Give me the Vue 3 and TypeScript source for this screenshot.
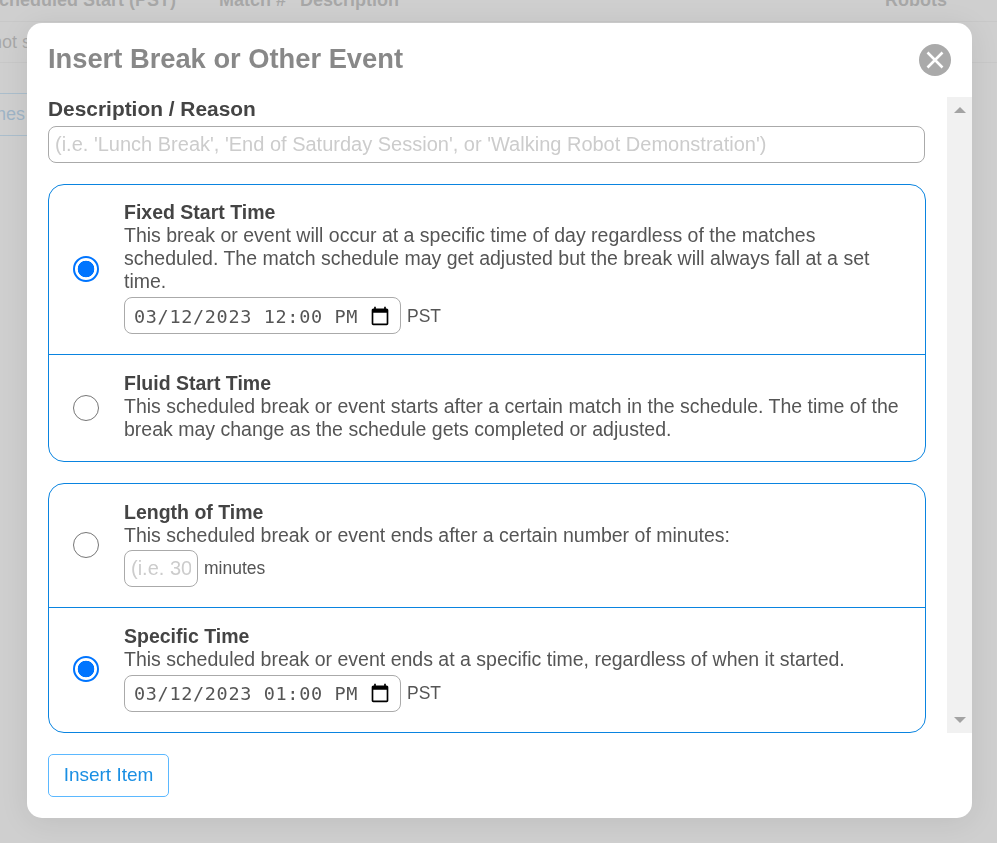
<template>
  <div class="page">
    <div class="table-head">
      <span class="col-start">Scheduled Start (PST)</span>
      <span class="col-match">Match #</span>
      <span class="col-desc">Description</span>
      <span class="col-robots">Robots</span>
    </div>
    <div class="table-row">not scheduled</div>
    <button class="back-btn" type="button">Matches</button>
  </div>

  <div class="overlay"></div>

  <div class="modal">
    <div class="modal-head">
      <h2>Insert Break or Other Event</h2>
      <button class="close" type="button" aria-label="Close">
        <svg width="32" height="32" viewBox="0 0 32 32">
          <circle cx="16" cy="16" r="16" fill="#aaa" />
          <path d="M8.5 8.5 L23.5 23.5 M23.5 8.5 L8.5 23.5" stroke="#fff" stroke-width="2.6" />
        </svg>
      </button>
    </div>

    <div class="scroller">
      <form class="content" @submit.prevent>
        <label class="desc-label" for="desc">Description / Reason</label>
        <input
          id="desc"
          v-model="description"
          class="text-input"
          type="text"
          placeholder="(i.e. 'Lunch Break', 'End of Saturday Session', or 'Walking Robot Demonstration')"
        />

        <div class="group">
          <label class="option fixed">
            <span class="radio-cell">
              <input v-model="startMode" type="radio" name="start" value="fixed" />
            </span>
            <span class="body">
              <strong>Fixed Start Time</strong>
              <span class="text">This break or event will occur at a specific time of day regardless of the matches scheduled. The match schedule may get adjusted but the break will always fall at a set time.</span>
              <span class="when">
                <span class="date-input">
                  <span class="date-text">{{ startTime }}</span>
                  <svg width="20" height="20" viewBox="0 0 24 24">
                    <path :d="calendarIcon" fill="#000" />
                  </svg>
                </span>
                <span class="tz">PST</span>
              </span>
            </span>
          </label>
          <label class="option fluid">
            <span class="radio-cell">
              <input v-model="startMode" type="radio" name="start" value="fluid" />
            </span>
            <span class="body">
              <strong>Fluid Start Time</strong>
              <span class="text">This scheduled break or event starts after a certain match in the schedule. The time of the break may change as the schedule gets completed or adjusted.</span>
            </span>
          </label>
        </div>

        <div class="group">
          <label class="option length">
            <span class="radio-cell">
              <input v-model="endMode" type="radio" name="end" value="length" />
            </span>
            <span class="body">
              <strong>Length of Time</strong>
              <span class="text">This scheduled break or event ends after a certain number of minutes:</span>
              <span class="when">
                <input v-model="minutes" class="minutes-input" type="text" placeholder="(i.e. 30)" />
                <span class="unit">minutes</span>
              </span>
            </span>
          </label>
          <label class="option specific">
            <span class="radio-cell">
              <input v-model="endMode" type="radio" name="end" value="specific" />
            </span>
            <span class="body">
              <strong>Specific Time</strong>
              <span class="text">This scheduled break or event ends at a specific time, regardless of when it started.</span>
              <span class="when">
                <span class="date-input">
                  <span class="date-text">{{ endTime }}</span>
                  <svg width="20" height="20" viewBox="0 0 24 24">
                    <path :d="calendarIcon" fill="#000" />
                  </svg>
                </span>
                <span class="tz">PST</span>
              </span>
            </span>
          </label>
        </div>
      </form>

      <div class="scrollbar" aria-hidden="true">
        <span class="arrow up"></span>
        <span class="arrow down"></span>
      </div>
    </div>

    <button class="insert" type="button">Insert Item</button>
  </div>
</template>

<script setup lang="ts">
import { ref } from "vue";

const calendarIcon =
  "M20 3h-1V1h-2v2H7V1H5v2H4c-1.1 0-2 .9-2 2v16c0 1.1.9 2 2 2h16c1.1 0 2-.9 2-2V5c0-1.1-.9-2-2-2zm0 18H4V8h16v13z";

const description = ref("");
const minutes = ref("");
const startMode = ref("fixed");
const endMode = ref("specific");
const startTime = ref("03/12/2023 12:00 PM");
const endTime = ref("03/12/2023 01:00 PM");
</script>

<style>
html,
body {
  height: 100%;
  overflow: hidden;
  background: #fff;
}
</style>

<style scoped>
.page {
  height: 843px;
  font-family: "Liberation Sans", Arial, sans-serif;
  font-size: 18px;
  color: #3a3a3a;
}

.table-head {
  display: flex;
  box-sizing: border-box;
  height: 31px;
  margin-top: -9px;
  font-weight: 700;
  line-height: 18px;
  border-bottom: 1px solid #ddd;
}

.col-start {
  margin-left: -13px;
  width: 232px;
}

.col-match {
  width: 81px;
}

.col-desc {
  width: 585px;
}

.table-row {
  box-sizing: border-box;
  height: 41px;
  line-height: 40px;
  text-indent: -8px;
  border-bottom: 1px solid #ddd;
  overflow: hidden;
  white-space: nowrap;
}

.back-btn {
  display: block;
  margin: 30px 0 0 -60px;
  width: 110px;
  height: 43px;
  background: #fff;
  border: 1px solid #4aa8f0;
  border-radius: 5px;
  font: 18px "Liberation Sans", Arial, sans-serif;
  color: #0a7ad0;
  text-align: right;
  padding-right: 24px;
}

.overlay {
  position: fixed;
  inset: 0;
  background: rgba(195, 195, 195, 0.8);
  backdrop-filter: blur(0.6px);
}

.modal {
  position: fixed;
  left: 27px;
  top: 23px;
  width: 945px;
  height: 795px;
  display: flex;
  flex-direction: column;
  background: #fff;
  border-radius: 15px;
  box-shadow: 0 4px 30px rgba(0, 0, 0, 0.08);
  font-family: "Liberation Sans", Arial, sans-serif;
  font-size: 18px;
  line-height: 22px;
  color: #555;
}

.modal-head {
  display: flex;
  justify-content: space-between;
  height: 74px;
  padding: 20px 21px 0;
  box-sizing: border-box;
}

h2 {
  margin: 0;
  font-size: 27.3px;
  line-height: 32px;
  font-weight: 700;
  color: #888;
}

.close {
  width: 32px;
  height: 32px;
  margin: 1px 0 0;
  padding: 0;
  border: 0;
  background: none;
}

.close svg {
  display: block;
}

.scroller {
  display: flex;
  height: 636px;
  justify-content: space-between;
}

.content {
  width: 878px;
  margin-left: 21px;
  display: flex;
  flex-direction: column;
}

.desc-label {
  font-size: 20.9px;
  line-height: 24px;
  font-weight: 700;
  color: #444;
  margin-bottom: 5px;
}

.text-input {
  width: 877px;
  height: 37px;
  box-sizing: border-box;
  padding: 0 6px;
  border: 1px solid #aaa;
  border-radius: 8px;
  font: 20px "Liberation Sans", Arial, sans-serif;
  color: #444;
  outline: none;
}

.text-input::placeholder,
.minutes-input::placeholder {
  color: #ccc;
  opacity: 1;
}

.group {
  margin-top: 21px;
  border: 1px solid #0a84e0;
  border-radius: 16px;
}

.option {
  display: flex;
  box-sizing: border-box;
}

.option + .option {
  border-top: 1px solid #0a84e0;
}

.fixed {
  height: 169px;
}

.fluid {
  height: 107px;
}

.length {
  height: 123px;
}

.specific {
  height: 125px;
}

.radio-cell {
  width: 75px;
  flex: none;
  display: flex;
  align-items: center;
  padding: 0 0 2px 24px;
  box-sizing: border-box;
}

.radio-cell input {
  appearance: none;
  box-sizing: border-box;
  width: 26px;
  height: 26px;
  margin: 0;
  border: 1.8px solid #767676;
  border-radius: 50%;
  background: #fff;
}

.radio-cell input:checked {
  border: 2px solid #0075ff;
  background: radial-gradient(circle, #0075ff 0 8px, #fff 8.6px);
}

.fluid .radio-cell {
  padding-bottom: 0;
}

.body {
  display: flex;
  flex-direction: column;
  align-items: flex-start;
  justify-content: center;
  flex: 1;
  padding: 0 20px 4px 0;
  font-size: 19.5px;
  line-height: 23px;
}

.body strong {
  color: #444;
}

.when {
  display: flex;
  align-items: center;
  gap: 6px;
  margin-top: 4px;
  font-size: 17.5px;
}

.length .when {
  margin-top: 3px;
}

.tz,
.date-text {
  padding-top: 1px;
}

.date-input {
  width: 277px;
  height: 37px;
  box-sizing: border-box;
  display: flex;
  align-items: center;
  justify-content: space-between;
  padding: 0 10px 0 9px;
  border: 1px solid #aaa;
  border-radius: 8px;
  background: #fff;
  font: 18.5px "DejaVu Sans Mono", monospace;
  letter-spacing: 0.66px;
  color: #555;
  white-space: pre;
}

.date-input svg {
  display: block;
}

.minutes-input {
  width: 74px;
  height: 37px;
  box-sizing: border-box;
  padding: 0 6px;
  border: 1px solid #aaa;
  border-radius: 8px;
  font: 20px "Liberation Sans", Arial, sans-serif;
  outline: none;
}

.scrollbar {
  width: 25px;
  height: 636px;
  background: #f1f1f1;
  position: relative;
}

.arrow {
  position: absolute;
  left: 7px;
  width: 0;
  height: 0;
  border-left: 6px solid transparent;
  border-right: 6px solid transparent;
}

.up {
  top: 10px;
  border-bottom: 6px solid #a3a3a3;
}

.down {
  bottom: 10px;
  border-top: 6px solid #a3a3a3;
}

.insert {
  width: 121px;
  height: 43px;
  margin: 21px 0 0 21px;
  padding: 0 0 2px;
  background: #fff;
  border: 1px solid #5bb8ff;
  border-radius: 5px;
  font: 19px "Liberation Sans", Arial, sans-serif;
  color: #1a8fe3;
}
</style>
